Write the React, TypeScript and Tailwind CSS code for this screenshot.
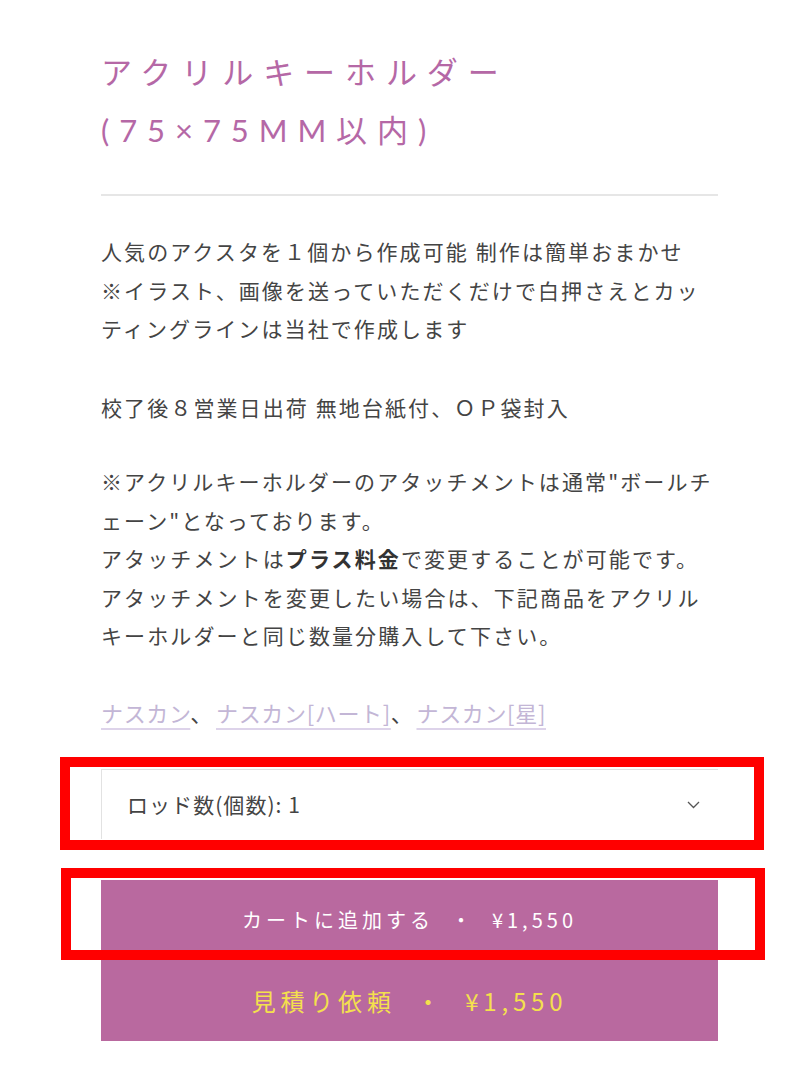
const jp = "font-['Noto_Sans_CJK_JP','Noto_Sans',sans-serif]";

function Chevron() {
  return (
    <svg width="13" height="8" viewBox="0 0 13 8" fill="none">
      <polyline points="1,1 6.5,6.5 12,1" stroke="#555" strokeWidth="1.3" />
    </svg>
  );
}

function RedFrame({ className }: { className: string }) {
  return <div className={`pointer-events-none absolute border-[10px] border-[#ff0000] ${className}`} />;
}

export default function App() {
  const links = ["ナスカン", "ナスカン[ハート]", "ナスカン[星]"];

  return (
    <div className={`min-h-[1078px] w-[800px] bg-white ${jp}`}>
      <div className="w-[718px] pl-[101px] pt-[43px]">
        <h1 className="font-['Lato','Noto_Sans_CJK_JP',sans-serif] text-[31px] leading-[58px] font-normal tracking-[0.32em] text-[#b568a6]">
          アクリルキーホルダー
          <br />
          (75×75MM以内)
        </h1>

        <div className="mt-[35px] h-[2px] bg-[#e6e6e6]" />

        <div className="mt-[36px] text-[21px] leading-[38.5px] tracking-[0.1em] text-[#444] whitespace-nowrap">
          <p>
            人気のアクスタを１個から作成可能 制作は簡単おまかせ
            <br />
            ※イラスト、画像を送っていただくだけで白押さえとカッ
            <br />
            ティングラインは当社で作成します
          </p>
          <p className="mt-[40px]">校了後８営業日出荷 無地台紙付、ＯＰ袋封入</p>
          <p className="mt-[36px]">
            ※アクリルキーホルダーのアタッチメントは通常"ボールチ
            <br />
            ェーン"となっております。
            <br />
            アタッチメントは<strong className="font-bold text-[#333]">プラス料金</strong>で変更することが可能です。
            <br />
            アタッチメントを変更したい場合は、下記商品をアクリル
            <br />
            キーホルダーと同じ数量分購入して下さい。
          </p>
          <p className="mt-[38px] text-[22px] tracking-[0.03em] text-[#c3b6d6]">
            {links.map((l, i) => (
              <span key={l}>
                <a className="underline decoration-[#ddd3ea] decoration-2 underline-offset-[6px]">{l}</a>
                {i < links.length - 1 && <span className="pr-[3px] text-[#444]">、</span>}
              </span>
            ))}
          </p>
        </div>

        <div className="relative mt-[38px]">
          <div className="flex h-[70px] items-center justify-between border-t border-l border-[#e2e2e2] pl-[25px] pr-[18px]">
            <span className="text-[21px] tracking-[0.05em] text-[#444]">ロッド数(個数): 1</span>
            <Chevron />
          </div>
          <RedFrame className="-left-[41px] -top-[12px] -right-[46px] -bottom-[11px]" />
        </div>

        <div className="relative mt-[41px]">
          <button className="flex h-[80px] w-full items-center justify-center bg-[#b9699f] text-[20px] tracking-[0.2em] text-white">
            カートに追加する&nbsp;&nbsp;・&nbsp;&nbsp;¥1,550
          </button>
          <RedFrame className="-left-[40px] -top-[12px] -right-[47px] bottom-0" />
        </div>
        <button className="flex h-[81px] w-full items-center justify-center bg-[#b9699f] text-[24px] tracking-[0.2em] text-[#f4e04d]">
          見積り依頼&nbsp;&nbsp;・&nbsp;&nbsp;¥1,550
        </button>
      </div>
    </div>
  );
}
